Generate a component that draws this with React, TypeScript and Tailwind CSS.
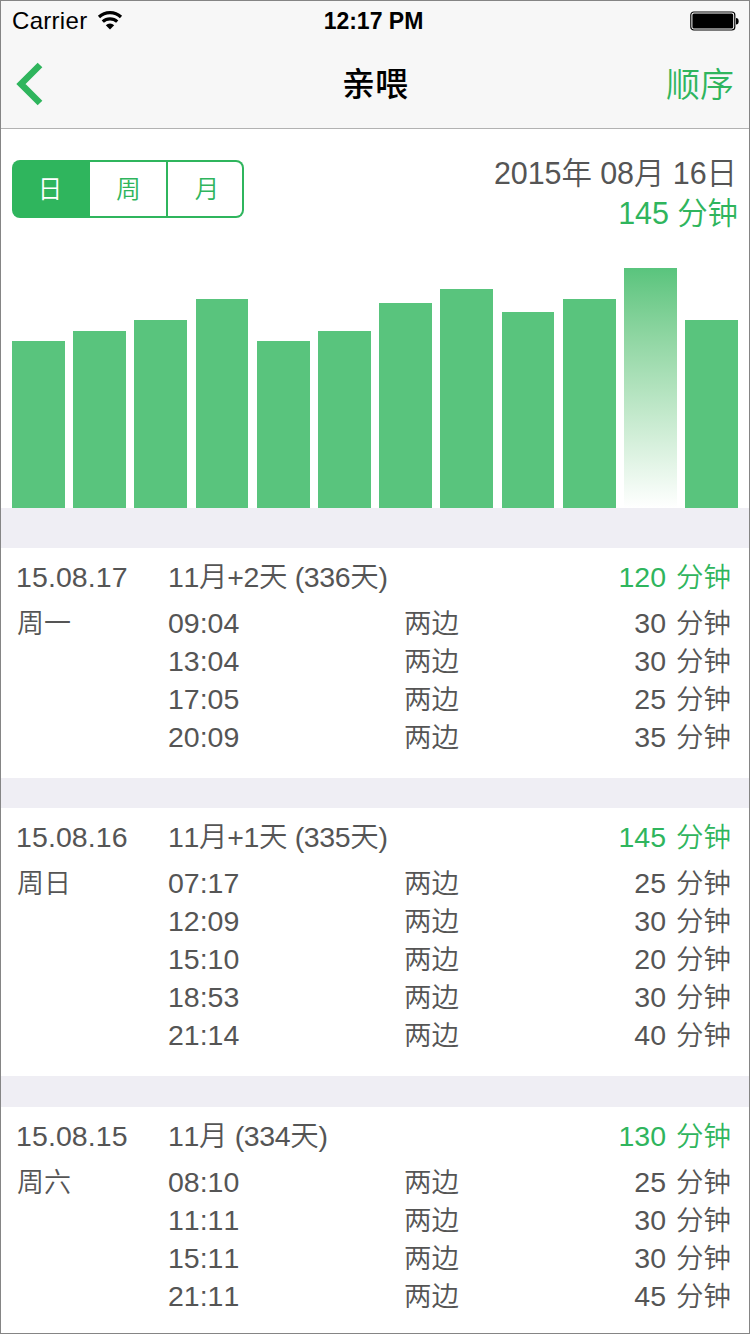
import React, { useState } from 'react';
import { clsx } from 'clsx';

interface Feeding {
  time: string;
  minutes: number;
}

interface Day {
  date: string;
  weekday: string;
  age: string;
  total: number;
  feedings: Feeding[];
}

const DAYS: Day[] = [
  {
    date: '15.08.17',
    weekday: '周一',
    age: '11月+2天 (336天)',
    total: 120,
    feedings: [
      { time: '09:04', minutes: 30 },
      { time: '13:04', minutes: 30 },
      { time: '17:05', minutes: 25 },
      { time: '20:09', minutes: 35 },
    ],
  },
  {
    date: '15.08.16',
    weekday: '周日',
    age: '11月+1天 (335天)',
    total: 145,
    feedings: [
      { time: '07:17', minutes: 25 },
      { time: '12:09', minutes: 30 },
      { time: '15:10', minutes: 20 },
      { time: '18:53', minutes: 30 },
      { time: '21:14', minutes: 40 },
    ],
  },
  {
    date: '15.08.15',
    weekday: '周六',
    age: '11月 (334天)',
    total: 130,
    feedings: [
      { time: '08:10', minutes: 25 },
      { time: '11:11', minutes: 30 },
      { time: '15:11', minutes: 30 },
      { time: '21:11', minutes: 45 },
    ],
  },
];

// bar heights in px
const BARS = [167, 177, 188, 209, 167, 177, 205, 219, 196, 209, 240, 188];
const SELECTED_BAR = 10;

const TABS = ['日', '周', '月'];

function StatusBar() {
  return (
    <div className="grid h-[39px] grid-cols-3 items-center pr-[10px] pl-[11px] text-black">
      <div className="flex items-center gap-[10px]">
        <span className="text-[24px] leading-[38px] tracking-[0.3px]">Carrier</span>
        <svg width="26" height="19" viewBox="0 0 26 19" fill="none" stroke="#000" strokeWidth="3.2">
          <path d="M2 6a16 16 0 0 1 22 0" />
          <path d="M5.800 10.700a10.500 10.500 0 0 1 14.400 0" />
          <path d="M8.800 14.200a6.200 6.200 0 0 1 8.400 0L13 18.500z" fill="#000" stroke="none" />
        </svg>
      </div>
      <span className="pr-[4px] text-center text-[23px] leading-[38px] font-bold">12:17 PM</span>
      <svg className="justify-self-end" width="49" height="20" viewBox="0 0 49 20">
        <rect x="0.800" y="1" width="44" height="18" rx="3" fill="#fff" stroke="#000" strokeWidth="1.2" />
        <rect x="2.400" y="2.600" width="40.800" height="14.800" rx="1.500" fill="#000" />
        <path d="M46 7a2.600 3.200 0 0 1 0 6.500z" fill="#000" />
      </svg>
    </div>
  );
}

function NavBar() {
  return (
    <div className="grid h-[88px] grid-cols-3 items-center pr-[15px] pl-[15px]">
      <button className="justify-self-start">
        <svg width="28" height="44" viewBox="0 0 28 44" fill="none" stroke="#2fb55d" strokeWidth="6.600">
          <path d="M24 3L5 22L24 41" />
        </svg>
      </button>
      <h1 className="pt-[2px] text-center text-[33px] leading-[40px] font-medium text-black">亲喂</h1>
      <button className="justify-self-end pt-[1px] text-[34px] leading-[40px] text-[#2fb55d]">顺序</button>
    </div>
  );
}

function Chart() {
  return (
    <div className="flex h-[240px] items-end gap-[8.27px] px-[11px]">
      {BARS.map((height, i) => (
        <div
          key={i}
          className={clsx('flex-1', i === SELECTED_BAR ? 'bg-linear-to-b from-[#59c47d] to-white' : 'bg-[#59c47d]')}
          style={{ height }}
        />
      ))}
    </div>
  );
}

function Minutes({ value }: { value: number }) {
  return (
    <span className="flex justify-end gap-[10px]">
      <span>{value}</span>
      <span className="pt-[2px] text-[27.500px] leading-[36px]">分钟</span>
    </span>
  );
}

function DayCard({ day }: { day: Day }) {
  return (
    <section className="bg-white pr-[18px] pb-[22px] pl-[15px] text-[28.500px]">
      <div className="flex h-[56px] items-center pt-[2px] leading-[38px]">
        <span className="w-[152px] tracking-[0.1px]">{day.date}</span>
        <span className="flex-1 tracking-[-0.35px]">{day.age}</span>
        <span className="text-[#2fb55d]">
          <Minutes value={day.total} />
        </span>
      </div>
      <div className="flex leading-[38px]">
        <span className="w-[152px] pt-[1px] pl-[1px] text-[27px]">{day.weekday}</span>
        <div className="flex-1">
          {day.feedings.map((feeding) => (
            <div key={feeding.time} className="flex h-[38px]">
              <span className="w-[236px]">{feeding.time}</span>
              <span className="flex-1 pt-[2px] text-[27.500px] leading-[36px]">两边</span>
              <Minutes value={feeding.minutes} />
            </div>
          ))}
        </div>
      </div>
    </section>
  );
}

export default function App() {
  const [tab, setTab] = useState(0);

  return (
    <div className="h-[1334px] w-[750px] overflow-hidden border border-[#858585] bg-white font-['Liberation_Sans','Noto_Sans_CJK_SC',sans-serif] font-[350] text-[#555] [font-kerning:none]">
      <header className="h-[128px] border-b border-[#b2b2b2] bg-[#f7f7f7]">
        <StatusBar />
        <NavBar />
      </header>

      <div className="flex h-[139px] items-start justify-between pr-[11px] pl-[11px]">
        <div className="mt-[31px] grid h-[58px] w-[232px] grid-cols-[76px_76px_76px] rounded-[8px] bg-[#2fb55d] p-[2px]">
          {TABS.map((label, i) => (
            <button
              key={label}
              onClick={() => setTab(i)}
              className={clsx(
                'pt-[1px] text-[24.500px] leading-[53px] first:rounded-l-[6px] last:rounded-r-[6px]',
                i === 0 && 'pr-[4px]',
                i === 1 && 'pl-[1px]',
                i === 2 && 'ml-[2px] pl-[4px]',
                tab === i ? 'text-white' : 'bg-white text-[#2fb55d]'
              )}
            >
              {label}
            </button>
          ))}
        </div>
        <div className="mt-[24px] text-right text-[30.500px] leading-[40px]">
          <div className="pr-[1px] tracking-[-0.08px]">2015年 08月 16日</div>
          <div className="text-[#2fb55d] tracking-[-0.1px]">145 分钟</div>
        </div>
      </div>

      <Chart />

      <div className="h-[40px] bg-[#efeef4]" />
      <DayCard day={DAYS[0]} />
      <div className="h-[30px] bg-[#efeef4]" />
      <DayCard day={DAYS[1]} />
      <div className="h-[31px] bg-[#efeef4]" />
      <DayCard day={DAYS[2]} />
    </div>
  );
}
